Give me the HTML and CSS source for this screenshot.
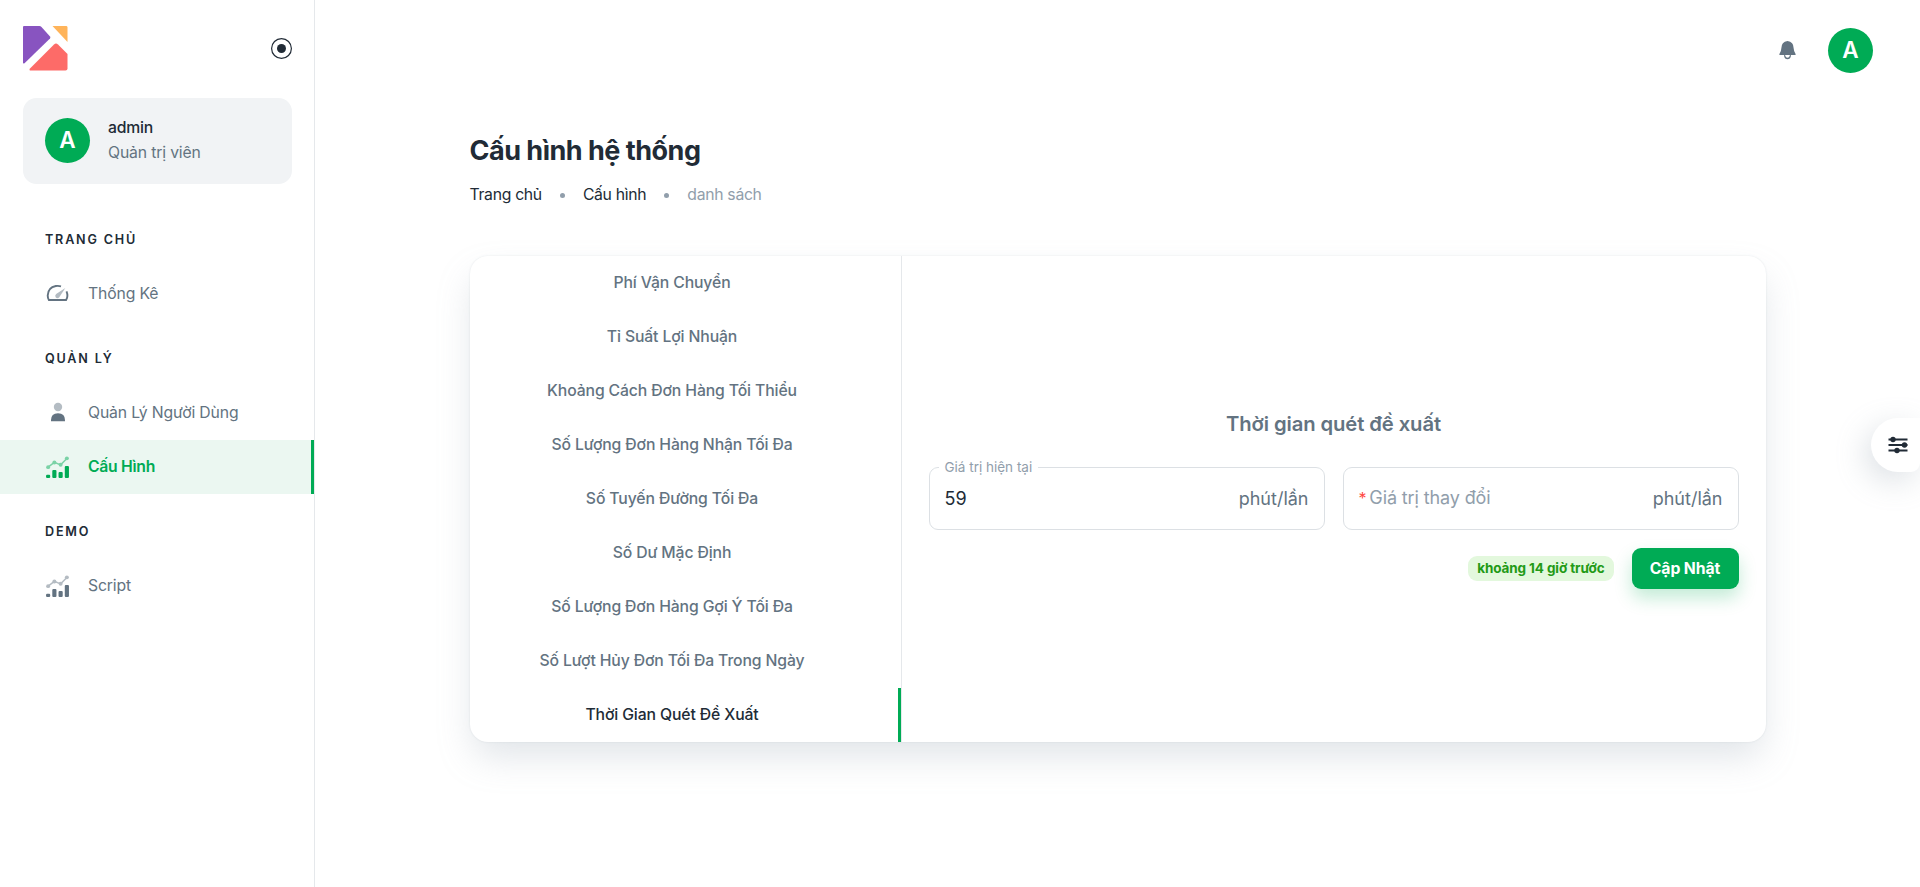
FILE: index.html
```html
<!DOCTYPE html>
<html lang="vi">
<head>
<meta charset="utf-8">
<title>Cấu hình hệ thống</title>
<link rel="stylesheet" href="styles.css">
</head>
<body>
<svg class="defs" width="0" height="0">
  <symbol id="chart" viewBox="0 0 24 24">
    <g opacity=".48"><path d="M3 12.6 9 8.1l6 2.3 6-6" fill="none" stroke="currentColor" stroke-width="1.4"/><circle cx="3" cy="12.6" r="1.9"/><circle cx="9" cy="8.1" r="1.9"/><circle cx="15" cy="10.4" r="1.9"/><circle cx="21" cy="4.2" r="1.9"/></g>
    <rect x="1" y="20" width="4" height="3" rx="1"/><rect x="7" y="15.4" width="4" height="7.6" rx="1"/><rect x="13" y="17.3" width="4" height="5.7" rx="1"/><rect x="19" y="11.4" width="4" height="11.6" rx="1"/>
  </symbol>
</svg>
<div class="app">
  <aside class="sidebar">
    <div class="brand">
      <svg width="45" height="45" viewBox="0 0 45 45"><path fill="#8854c0" d="M1 0h15.500q1 0 2 1L27 10.500q.8 1 0 2L1.500 37.200Q0 38 0 36.500V1q0-1 1-1Z"/><path fill="#ffb45a" d="M29.500 0H43.500Q44.500 0 44.500 1.500V16Z"/><path fill="#fd6b68" d="m7 42.500 24-24q2-2 4 0l9.500 9.500v14.500q0 2-2 2H8q-2.500 0-1-2Z"/></svg>
      <svg width="21" height="21" viewBox="0 0 21 21"><circle cx="10.500" cy="10.500" r="9.900" fill="none" stroke="#212b36" stroke-width="1.200"/><circle cx="10.500" cy="10.500" r="4.500" fill="#212b36"/></svg>
    </div>
    <div class="account">
      <div class="avatar">A</div>
      <div><div class="account-name">admin</div><div class="account-role">Quản trị viên</div></div>
    </div>
    <nav>
      <div class="nav-title">Trang chủ</div>
      <a class="nav-item"><svg class="nav-icon" viewBox="0 0 25 25"><path fill="none" stroke="currentColor" stroke-width="1.900" d="M16 5.300Q13.500 4.600 10.800 5 3 6.500 2.700 14.500q0 2.500 1.200 4.500h17.200q2.400-3.900.4-8.700"/><path d="m20.300 7-6 9.200q-1.800 1.700-3.500.3-1.400-1.700.3-3.400Z" opacity=".48"/></svg><span>Thống Kê</span></a>
      <div class="nav-title">Quản lý</div>
      <a class="nav-item"><svg class="nav-icon" viewBox="0 0 25 25"><circle cx="13" cy="7" r="4.200" opacity=".48"/><path d="M6 21.200v-1q0-7 7-7t7 7v1Z"/></svg><span>Quản Lý Người Dùng</span></a>
      <a class="nav-item active"><svg class="nav-icon"><use href="#chart"/></svg><span>Cấu Hình</span></a>
      <div class="nav-title">Demo</div>
      <a class="nav-item"><svg class="nav-icon"><use href="#chart"/></svg><span>Script</span></a>
    </nav>
  </aside>
  <div class="page">
    <header class="topbar">
      <svg class="bell" width="17" height="19" viewBox="0 0 17 19"><path d="M8.500 0Q2.400.5 2.300 7.500q0 3-2 5.700Q0 14 1 14h15q1 0 .7-.8-2-2.700-2-5.700Q14.600.5 8.500 0Z"/><path d="M5.800 13.500v1.700q.4 2.300 2.700 2.300t2.700-2.300v-1.700" fill="none" stroke="currentColor" stroke-width="1.300"/><path d="M6.500 14h4v1q-2 1-4 0Z" fill="#fff"/></svg>
      <div class="avatar">A</div>
    </header>
    <main class="content">
      <h1>Cấu hình hệ thống</h1>
      <div class="crumbs"><span>Trang chủ</span><i></i><span>Cấu hình</span><i></i><span class="current">danh sách</span></div>
      <section class="card">
        <div class="tabs">
          <div class="tab"><span>Phí Vận Chuyển</span></div>
          <div class="tab"><span>Tỉ Suất Lợi Nhuận</span></div>
          <div class="tab"><span>Khoảng Cách Đơn Hàng Tối Thiểu</span></div>
          <div class="tab"><span>Số Lượng Đơn Hàng Nhận Tối Đa</span></div>
          <div class="tab"><span>Số Tuyến Đường Tối Đa</span></div>
          <div class="tab"><span>Số Dư Mặc Định</span></div>
          <div class="tab"><span>Số Lượng Đơn Hàng Gợi Ý Tối Đa</span></div>
          <div class="tab"><span>Số Lượt Hủy Đơn Tối Đa Trong Ngày</span></div>
          <div class="tab selected"><span>Thời Gian Quét Đề Xuất</span></div>
        </div>
        <div class="panel">
          <h2>Thời gian quét đề xuất</h2>
          <div class="fields">
            <div class="field"><span class="label">Giá trị hiện tại</span><span class="value">59</span><span class="unit">phút/lần</span></div>
            <div class="field"><span class="hint"><b>*</b> Giá trị thay đổi</span><span class="unit">phút/lần</span></div>
          </div>
          <div class="actions"><span class="chip">khoảng 14 giờ trước</span><button class="save">Cập Nhật</button></div>
        </div>
      </section>
    </main>
  </div>
</div>
<div class="settings"><svg width="20" height="18" viewBox="0 0 20 18" fill="#212b36"><path d="M.5 3.500h19M.5 9h19M.5 14.500h19" stroke="#212b36" stroke-width="1.800"/><circle cx="5" cy="3.500" r="2.700"/><circle cx="16.500" cy="9" r="2.700"/><circle cx="9" cy="14.500" r="2.700"/></svg></div>
</body>
</html>
```
FILE: styles.css
```css
* { box-sizing: border-box; }
body { margin: 0; background: #fff; color: #212b36; font: 15.75px/24.75px Inter, "Noto Sans", sans-serif; overflow: hidden; }
.defs { display: block; }
.app { display: flex; height: 887px; }
.sidebar { width: 315px; flex: none; border-right: 1px solid #e5e8eb; }
.brand { display: flex; justify-content: space-between; align-items: center; height: 44px; margin: 26px 22px 28px 23px; }
.account { display: flex; align-items: center; gap: 18px; height: 86px; margin: 0 22px 0 23px; padding: 0 22px; background: #f1f3f5; border-radius: 13.5px; }
.account .avatar { margin-top: -1px; }
.avatar { display: flex; align-items: center; justify-content: center; width: 45px; height: 45px; border-radius: 50%; background: #00ab55; color: #fff; font-size: 22.5px; font-weight: 600; }
.account-name { font-weight: 500; letter-spacing: -.25px; }
.account-role { color: #637381; letter-spacing: -.15px; }
nav { padding-top: 18px; }
.nav-title { height: 65px; padding: 28px 0 0 45px; font-size: 12.6px; line-height: 20px; font-weight: 600; letter-spacing: 1.8px; text-transform: uppercase; }
.nav-item { display: flex; align-items: center; height: 54px; padding-left: 45px; color: #637381; letter-spacing: -.15px; }
.nav-icon { width: 25px; height: 25px; margin: -2px 18px 0 0; fill: currentColor; }
.nav-item.active { color: #00ab55; background: #ebf7f1; border-right: 3px solid #00ab55; font-weight: 600; letter-spacing: -.3px; }
.page { flex: 1; }
.topbar { display: flex; justify-content: flex-end; align-items: center; gap: 32px; height: 101px; padding-right: 47px; }
.bell { fill: #637381; color: #637381; }
.content { width: 1296px; margin: 0 auto; padding-top: 29px; }
h1 { margin: 0; font-size: 27px; line-height: 42px; font-weight: 700; letter-spacing: -.5px; }
.crumbs { display: flex; align-items: center; margin-top: 11px; letter-spacing: -.3px; }
.crumbs i { width: 5px; height: 5px; margin: 0 18px; border-radius: 50%; background: #919eab; }
.crumbs .current { color: #919eab; }
.card { display: flex; height: 486px; margin-top: 48px; border-radius: 18px; background: #fff; box-shadow: 0 0 2px rgba(145,158,171,.24), 0 18px 36px -4.5px rgba(145,158,171,.28); overflow: hidden; }
.tabs { width: 432px; border-right: 1px solid #e5e8eb; }
.tab { display: flex; align-items: center; justify-content: center; height: 54px; padding: 1px 26px 0 0; color: #637381; font-weight: 500; letter-spacing: -.12px; }
.tab.selected { padding-right: 23px; border-right: 3px solid #00ab55; color: #212b36; }
.panel { flex: 1; display: flex; flex-direction: column; justify-content: center; padding: 0 27px; }
h2 { margin: 0 0 27px; text-align: center; font-size: 20.25px; line-height: 32px; font-weight: 600; letter-spacing: -.1px; color: #637381; }
.fields { display: grid; grid-template-columns: 1fr 1fr; gap: 18px; }
.field { position: relative; display: flex; align-items: center; height: 63px; padding: 1px 15px 0; border: 1px solid #dce0e4; border-radius: 9px; font-size: 18px; }
.label { position: absolute; top: -13px; left: 9px; padding: 0 6px; background: #fff; color: #919eab; font-size: 13.5px; }
.unit { margin-left: auto; color: #637381; }
.hint { margin-top: -2px; color: #919eab; letter-spacing: -.12px; }
.hint b { margin-right: -2px; color: #ff4842; font-weight: 400; font-size: 16px; }
.actions { display: flex; justify-content: flex-end; align-items: center; gap: 18px; margin-top: 18px; }
.chip { height: 25px; padding: 0 9px; border-radius: 9px; background: #e3f8dd; color: #229a16; font-size: 13.5px; font-weight: 700; letter-spacing: -.1px; }
.save { width: 107px; height: 41px; border: 0; border-radius: 9px; background: #00ab55; color: #fff; font: 700 15.75px Inter, sans-serif; padding: 0; letter-spacing: -.1px; box-shadow: 0 9px 18px rgba(0,171,85,.24); }
.settings { position: absolute; top: 418px; right: 0; display: flex; align-items: center; width: 49px; height: 54px; padding-left: 17px; border-radius: 27px 0 9px 27px; background: #fff; box-shadow: -6px 9px 30px rgba(145,158,171,.3); }
```
